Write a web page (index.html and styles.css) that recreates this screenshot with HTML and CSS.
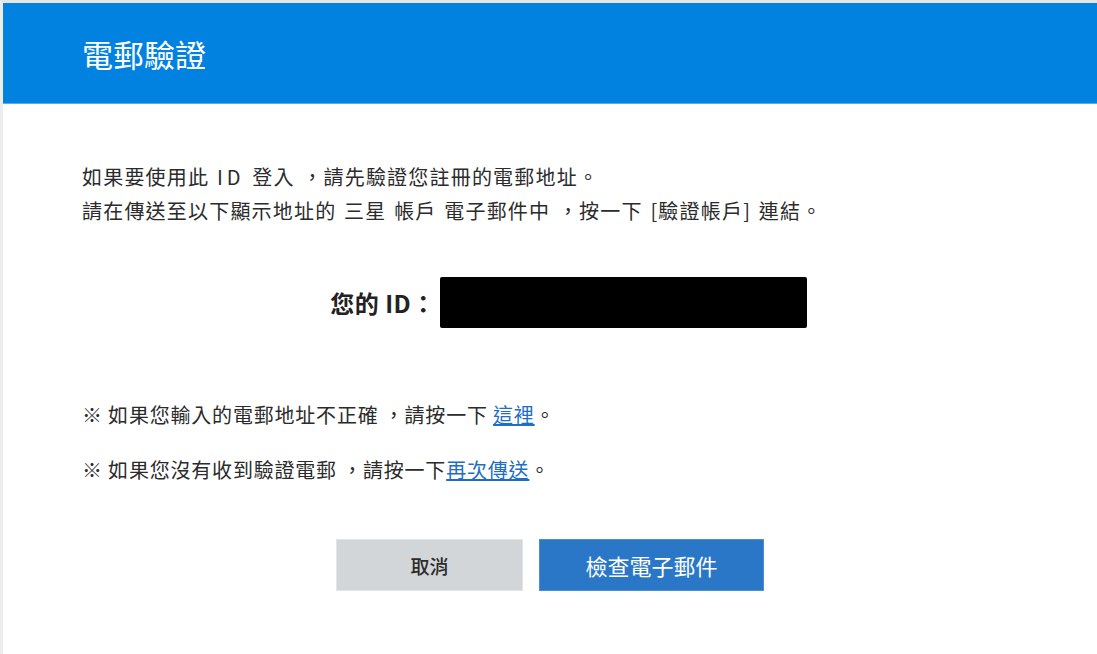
FILE: index.html
```html
<!DOCTYPE html>
<html lang="zh-Hant">
<head>
<meta charset="utf-8">
<title>電郵驗證</title>
<link rel="stylesheet" href="styles.css">
</head>
<body>
<div class="frame">
  <header class="header">
    <h1 class="title">電郵驗證</h1>
  </header>
  <main class="content">
    <p class="intro">如果要使用此 <span class="latin">ID</span> 登入 ，請先驗證您註冊的電郵地址。<br>請在傳送至以下顯示地址的 三星 帳戶 電子郵件中 ，按一下 [驗證帳戶] 連結。</p>
    <div class="id-row">
      <span class="id-label">您的 ID：</span>
      <span class="id-mask"></span>
    </div>
    <p class="note">※ 如果您輸入的電郵地址不正確 ，請按一下 <a href="#" class="link">這裡</a>。</p>
    <p class="note">※ 如果您沒有收到驗證電郵 ，請按一下<a href="#" class="link">再次傳送</a>。</p>
    <div class="actions">
      <button class="btn btn-cancel" type="button">取消</button>
      <button class="btn btn-primary" type="button">檢查電子郵件</button>
    </div>
  </main>
</div>
</body>
</html>
```

FILE: styles.css
```css
html, body {
  margin: 0;
  padding: 0;
  background: #ffffff;
}
body {
  font-family: "Noto Sans CJK TC", "Noto Sans", "Liberation Sans", sans-serif;
  color: #2b2b2b;
}
.frame {
  min-height: 651px;
  border-top: 3px solid #e6e6e6;
  border-left: 3px solid #ececec;
}
.header {
  height: 100px;
  background: #0282e0;
  border-bottom: 1px solid #5aaaea;
  display: flex;
  align-items: center;
  padding-left: 79px;
}
.title {
  margin: 0;
  font-size: 31px;
  font-weight: 400;
  color: #ffffff;
  line-height: 1;
  letter-spacing: 0;
}
.content {
  padding: 56px 79px 0 79px;
}
.intro {
  margin: 0;
  font-size: 20px;
  line-height: 34px;
  letter-spacing: 1.2px;
  word-spacing: 2px;
}
.latin {
  letter-spacing: 4px;
}
.id-row {
  margin-top: 49px;
  display: flex;
  justify-content: center;
  align-items: center;
  padding-left: 37px;
  gap: 4px;
}
.id-label {
  font-size: 24px;
  font-weight: 700;
  color: #222;
  letter-spacing: 0.5px;
}
.id-mask {
  width: 367px;
  height: 51px;
  background: #000;
  border-radius: 2px;
}
.note {
  margin: 70px 0 0 0;
  font-size: 20px;
  line-height: 34px;
  letter-spacing: 0.8px;
}
.note + .note {
  margin-top: 21px;
}
.link {
  color: #1e6fc4;
  text-decoration: underline;
}
.actions {
  margin-top: 52px;
  display: flex;
  justify-content: center;
  gap: 16px;
}
.btn {
  height: 52px;
  font-family: inherit;
  border-radius: 0;
  cursor: pointer;
}
.btn-cancel {
  width: 187px;
  background: #d3d6d9;
  border: 1px solid #e2e4e6;
  color: #2b2b2b;
  font-size: 19px;
  font-weight: 500;
}
.btn-primary {
  width: 225px;
  background: #2a77c7;
  border: 1px solid #4c8fd4;
  color: #fff;
  font-size: 22px;
}
```
